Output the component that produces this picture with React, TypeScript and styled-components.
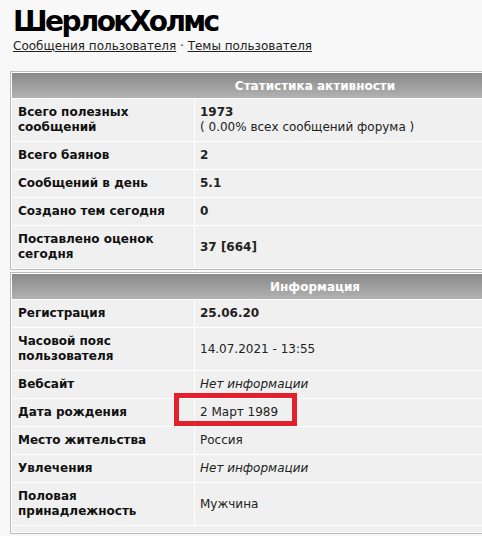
import React, { FC } from 'react';
import styled, { createGlobalStyle } from 'styled-components';

const GlobalStyle = createGlobalStyle`
  html, body {
    margin: 0;
    padding: 0;
    background: #f8f8f8;
    overflow: hidden;
  }
  body {
    font-family: "DejaVu Sans", Verdana, sans-serif;
    font-size: 12px;
    color: #111;
  }
`;

const Page = styled.div`
  position: relative;
  width: 482px;
  height: 536px;
  overflow: hidden;
  padding: 4px 0 0 10px;
  box-sizing: border-box;
`;

const Title = styled.h1`
  margin: 0 0 0 3px;
  font-size: 28px;
  line-height: 35px;
  font-weight: bold;
  letter-spacing: -2.6px;
  color: #000;
`;

const Links = styled.div`
  margin: 0 0 0 3px;
  line-height: 15px;
  color: #222;

  a {
    color: #222;
    text-decoration: underline;
  }
`;

const Table = styled.table<{ $first?: boolean }>`
  width: 610px;
  border: 1px solid #bbb;
  border-spacing: 1px;
  background: #fff;
  margin-top: ${p => (p.$first ? '17px' : '2px')};
`;

const Head = styled.th`
  height: 25px;
  padding: 0;
  background: linear-gradient(#898989, #b2b2b2);
  color: #fff;
  font-weight: bold;
  text-align: center;
`;

const Label = styled.td`
  width: 170px;
  padding: 0 6px;
  background: #f0f0f0;
  font-weight: bold;
  color: #111;
  line-height: 15px;
`;

type ValueProps = { $kind?: 'bold' | 'italic' | 'plain' };

const Value = styled.td<ValueProps>`
  padding: 0 5px;
  background: #f0f0f0;
  line-height: 15px;
  color: #222;
  font-weight: ${p => (p.$kind === 'bold' ? 'bold' : 'normal')};
  font-style: ${p => (p.$kind === 'italic' ? 'italic' : 'normal')};
`;

const Row = styled.tr<{ $tall?: boolean }>`
  height: ${p => (p.$tall ? '42px' : '27px')};
`;

const Spacer = styled.td`
  height: 6px;
  padding: 0;
  background: #f0f0f0;
`;

const Strong = styled.b`
  font-weight: bold;
`;

const Highlight = styled.div`
  position: absolute;
  left: 174px;
  top: 393px;
  width: 113px;
  height: 23px;
  border: 5px solid #e3202b;
`;

type Item = { label: string; value: React.ReactNode; kind?: ValueProps['$kind']; tall?: boolean };

const stats: Item[] = [
  {
    label: 'Всего полезных сообщений',
    value: (
      <>
        <Strong>1973</Strong>
        <br />( 0.00% всех сообщений форума )
      </>
    ),
    kind: 'plain',
    tall: true,
  },
  { label: 'Всего баянов', value: '2', kind: 'bold' },
  { label: 'Сообщений в день', value: '5.1', kind: 'bold' },
  { label: 'Создано тем сегодня', value: '0', kind: 'bold' },
  { label: 'Поставлено оценок сегодня', value: '37 [664]', kind: 'bold', tall: true },
];

const info: Item[] = [
  { label: 'Регистрация', value: '25.06.20', kind: 'bold' },
  { label: 'Часовой пояс пользователя', value: '14.07.2021 - 13:55', tall: true },
  { label: 'Вебсайт', value: 'Нет информации', kind: 'italic' },
  { label: 'Дата рождения', value: '2 Март 1989' },
  { label: 'Место жительства', value: 'Россия' },
  { label: 'Увлечения', value: 'Нет информации', kind: 'italic' },
  { label: 'Половая принадлежность', value: 'Мужчина', tall: true },
];

const Section: FC<{ title: string; items: Item[]; first?: boolean; footer?: boolean }> = ({
  title,
  items,
  first,
  footer,
}) => (
  <Table $first={first}>
    <tbody>
      <tr>
        <Head colSpan={2}>{title}</Head>
      </tr>
      {items.map(item => (
        <Row key={item.label} $tall={item.tall}>
          <Label>{item.label}</Label>
          <Value $kind={item.kind}>{item.value}</Value>
        </Row>
      ))}
      {footer && (
        <tr>
          <Spacer colSpan={2} />
        </tr>
      )}
    </tbody>
  </Table>
);

const App: FC = () => (
  <Page>
    <GlobalStyle />
    <Title>ШерлокХолмс</Title>
    <Links>
      <a href="#">Сообщения пользователя</a> · <a href="#">Темы пользователя</a>
    </Links>
    <Section title="Статистика активности" items={stats} first />
    <Section title="Информация" items={info} footer />
    <Highlight />
  </Page>
);

export default App;
